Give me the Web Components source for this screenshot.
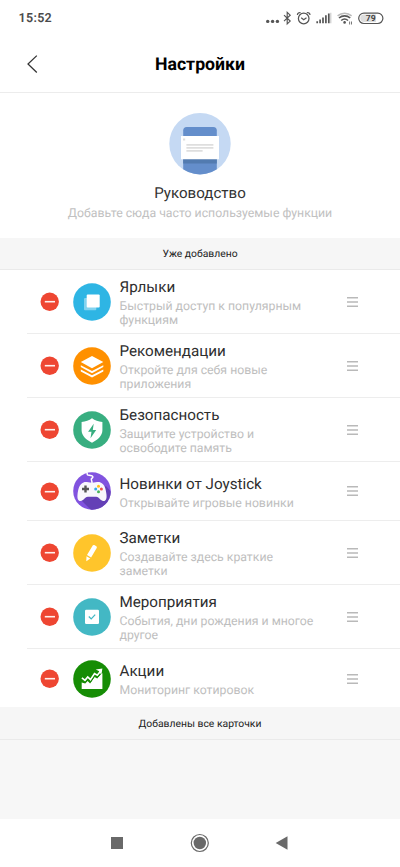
<!DOCTYPE html>
<html lang="ru"><head><meta charset="utf-8"><title>Настройки</title>
<style>html,body{margin:0;height:100%;background:#fff}body{font-family:Roboto,"Noto Sans",sans-serif;overflow:hidden;text-rendering:geometricPrecision}</style></head>
<body><settings-screen></settings-screen>
<script>
const define=(name,html)=>customElements.define(name,class extends HTMLElement{
  constructor(){super();const t=document.createElement('template');t.innerHTML=html;
    this.attachShadow({mode:'open'}).append(t.content.cloneNode(true));}
});

define('status-bar',`<style>
:host{display:flex;height:37px;box-sizing:border-box;padding:0 16px 0 18.5px;justify-content:space-between;align-items:center}
span{font-size:12.5px;font-weight:600;color:#4a4a4a;letter-spacing:.32px;line-height:16px}
svg{display:block}</style>
<span>15:52</span>
<svg width="120" height="20" viewBox="264 8.500 120 20" fill="none" stroke="#555">
<g fill="#555" stroke="none"><circle cx="267.7" cy="20.900" r="1.7"/><circle cx="272.6" cy="20.900" r="1.7"/><circle cx="277.4" cy="20.900" r="1.7"/></g>
<path d="M284 14.600l6.200 6-3 2.800V11.900l3 2.800-6.200 6" stroke-width="1.15"/>
<circle cx="303.700" cy="18" r="5.300" stroke-width="1.25"/><path d="M301.200 17.200l2.500 2 2.800-2M297.400 14.600c0-1.800 1.600-3 3.200-2.400M310 14.600c0-1.800-1.600-3-3.200-2.400" stroke-width="1.2"/>
<path d="M317.200 20.7V22.800M320.100 18.9V22.800M323 16.9V22.800M325.9 14.8V22.800M328.8 13V22.800" stroke-width="1.7"/><path d="M330.800 12.200V22.800" stroke="#c8c8c8" stroke-width="1.1"/>
<path d="M337.600 15.400c4-3.600 10-3.600 14 0" stroke="#bbb" stroke-width="1.5"/><path d="M339 17.500c3.200-2.800 8-2.800 11.200 0M341.200 20c2-1.800 4.800-1.800 6.800 0" stroke-width="1.6"/><circle cx="344.600" cy="21.900" r="1.300" fill="#555" stroke="none"/><path d="M349.600 21v3M351.500 21v3" stroke-width=".8"/>
<rect x="358.700" y="12.600" width="24.200" height="10.400" rx="5.2" fill="#fff" stroke-width="1.2"/><path d="M364 14.100h12v7.4h-12a3.7 3.7 0 010-7.4" fill="#dedede" stroke="none"/>
<text x="370.7" y="20.900" font-size="8.6" font-weight="700" text-anchor="middle" fill="#444" stroke="none">79</text></svg>`);

define('title-bar',`<style>
:host{display:grid;grid-template-columns:60px 1fr 60px;height:56px;box-sizing:border-box;border-bottom:1px solid #ececec;align-items:center}
svg{display:block;margin:0 0 1px 26px}
h1{margin:1px 0 0;font-size:17.7px;font-weight:700;text-align:center;line-height:24px;color:#000}</style>
<svg width="14" height="20" viewBox="0 0 14 20" fill="none" stroke="#333" stroke-width="1.25"><path d="M10.8 1.6L2 10l8.8 8.5"/></svg><h1><slot></slot></h1>`);

define('guide-panel',`<style>
:host{display:flex;flex-direction:column;align-items:center;height:145px;box-sizing:border-box;padding-top:20px}
svg{display:block;flex:none}
h2{margin:8px 0 0;font-size:15.1px;line-height:20px;font-weight:400;color:#333}
p{margin:2px 0 0;font-size:12.27px;line-height:16px;color:#c1c1c1;white-space:nowrap}</style>
<svg width="62" height="62" viewBox="0 0 62 62"><defs><clipPath id="c"><circle cx="31" cy="30.7" r="30.7"/></clipPath></defs>
<g clip-path="url(#c)"><path fill="#c5d9f3" d="M0 0h62v62H0z"/><rect x="14.2" y="14" width="33.6" height="60" rx="3.5" fill="#648ecb"/><path fill="#527bb0" d="M14.2 46h33.6v4.6H14.2z"/></g>
<path fill="#fff" d="M12 23h38v23.2H12z"/><path fill="#dedede" d="M14 25.4h2.2v2.2H14zM17.4 31h27v1.7h-27zM17.4 34.1h27v1.7h-27zM17.4 37h16.2v1.7H17.4z"/></svg>
<h2><slot name="title"></slot></h2><p><slot></slot></p>`);

define('section-label',`<style>
:host{display:flex;align-items:center;justify-content:center;height:32px;box-sizing:border-box;padding-top:1px;background:#f6f6f6;border-bottom:1px solid #eaeaea;font-size:10.35px;color:#222;line-height:14px}
:host([end]){height:33px;padding-top:2px}</style><slot></slot>`);

define('card-row',`<style>
:host{display:grid;grid-template-columns:19px 37.5px 1fr 12px;column-gap:14px;align-items:center;margin-left:27px;padding:0 41px 0 13px;height:64px;box-sizing:border-box;border-bottom:1px solid #ededed}
:host([single]){height:59px}
:host([last]){border:0;height:58px;padding-top:1px}
svg{display:block}
.text{margin:2px 0 0 -5px;white-space:nowrap}
:host([single]) .text{margin-top:3px}
h3{margin:0 0 3px;font-size:15.2px;line-height:18px;font-weight:400;color:#2e2e2e}
p{margin:0;font-size:12.27px;line-height:14.4px;color:#bebebe;white-space:pre-line}</style>
<svg width="19" height="19" viewBox="0 0 19 19"><circle cx="9.7" cy="9.700" r="9.2" fill="#ee4632"/><path fill="#fff0ed" d="M4.800 8.900h10.200v1.600H4.800z"/></svg>
<slot name="icon"></slot>
<div class="text"><h3><slot name="title"></slot></h3><p><slot></slot></p></div>
<svg width="12" height="12" viewBox="0 0 12 12"><path d="M0 1.800h11M0 6h11M0 10.200h11" stroke="#b9b9b9" stroke-width="1.600"/></svg>`);

const glyphs={
shortcuts:['#2eb5e4','<rect x="11" y="15" width="12.3" height="12.3" rx="1" fill="#82d3ef"/><rect x="13.7" y="11.4" width="13" height="13" rx="1" fill="#fff"/>'],
layers:['#ff9000','<path fill="#fff" d="M19 9l11.3 6L19 21.2 7.8 15zM7.8 18.2L19 24l11.3-5.8v1.9L19 26.2 7.8 20.1zM7.8 22.4L19 28.2l11.3-5.8v2L19 30.5 7.8 24.4z"/>'],
shield:['#38ae80','<path fill="#fff" d="M19 7.2c3 2.3 6.3 3.3 10.4 3.7v8.4c0 5.5-4.5 9.6-10.4 12.5C13.100 28.900 8.600 24.800 8.600 19.300V10.900C12.700 10.500 16 9.500 19 7.200z"/><path fill="#38ae80" d="M20.7 12.7l-5.6 8h3.4l-1 6.6 5.7-8.4h-3.4z"/>'],
gamepad:['#8153df','<path clip-path="url(#k)" fill="#6440b6" d="M8 28l14 14 18-8V22l-7-8z"/><path d="M14.300 0.500c-.8 3 .8 2.500 3.500 3.100 2.800.6 2.500 2 .9 2.900-1.300.8.4 1.500.3 4.500" fill="none" stroke="#fff" stroke-width="1.500"/><path fill="#f8f7fc" d="M10.500 10.400c2.700-1 4.500.3 8.500.3s5.800-1.300 8.500-.3c4 1.200 5.500 6.600 6 12.300.4 4-.6 6.300-3.100 6.300-3 0-3.900-3.900-7.200-4.200h-8.400C11.500 25.100 10.600 29 7.600 29c-2.500 0-3.500-2.300-3.100-6.300.5-5.700 2-11.100 6-12.300z"/><path d="M12.500 13.500v7M9 17h7" stroke="#555" stroke-width="2.400"/><circle cx="25.500" cy="14.300" r="1.500" fill="#ffbd19"/><circle cx="28.400" cy="17" r="1.500" fill="#f2524a"/><circle cx="22.700" cy="17" r="1.500" fill="#31a9e9"/><circle cx="25.500" cy="19.800" r="1.500" fill="#49b45b"/>'],
pencil:['#ffc52b','<g fill="#fff"><path d="M19.700 11.500q.6-1 1.600-.4l2 1.200q1 .6.400 1.600l-5.600 9.500-4.100-2.400z"/><path d="M13.500 22.200l3.800 2.200-3.600 2.700q-.4.200-.4-.3z"/></g>'],
check:['#43b8c4','<rect x="12" y="11.800" width="14" height="14.200" rx="1.200" fill="#fff"/><path d="M15.800 18.500l2.400 2.400 4-4.300" fill="none" stroke="#43b8c4" stroke-width="1.300"/>'],
stocks:['#168d05','<path fill="#fff" d="M8.700 22.500l3.500 1.100 2.400-2.700 2.500 2.500 4.500-6.500 2.600 1.700 4.100-4.900 1.100-.5V29H8.700z"/><path d="M8.900 17.800l3.100 2.500 2.700-3.400 2.800 2.800 4-6.100 2.800 1.600 4-4.900" fill="none" stroke="#fff" stroke-width="1.700"/><path d="M9 21.300l3.100 1.400 2.700-3.200 2.800 2.500 4-5.900 2.800 1.400 4.800-5.600" fill="none" stroke="#168d05" stroke-width="1"/><path fill="#fff" d="M22.700 9.600l6.700-1-1.100 6.300-1.500-2.500-1-1.500z"/>']
};
customElements.define('card-icon',class extends HTMLElement{
  connectedCallback(){
    if(this.shadowRoot)return;
    const [color,art]=glyphs[this.getAttribute('kind')];
    this.attachShadow({mode:'open'}).innerHTML=`<style>:host{display:block;width:38px;height:38px}svg{display:block}</style><svg width="38" height="38" viewBox="0 0 38 38"><defs><clipPath id="k"><circle cx="19" cy="19" r="18.800"/></clipPath></defs><circle cx="19" cy="19" r="18.800" fill="${color}"/>${art}</svg>`;
  }
});

define('nav-bar',`<style>:host{display:flex;height:48px;background:#fff;justify-content:center;align-items:center;gap:63px}svg{display:block}</style>
<svg width="20" height="20" viewBox="0 0 20 20"><path fill="#696969" d="M4 4h12v12H4z"/></svg>
<svg width="20" height="20" viewBox="0 0 20 20" overflow="visible"><circle cx="9.800" cy="10" r="8.500" fill="none" stroke="#696969" stroke-width="1.200"/><circle cx="9.800" cy="10" r="6.200" fill="#696969"/></svg>
<svg width="20" height="20" viewBox="0 0 20 20"><path fill="#696969" d="M14.500 3.200v13.600L2.700 10z"/></svg>`);

const rows=[
['shortcuts','Ярлыки','Быстрый доступ к популярным\nфункциям'],
['layers','Рекомендации','Откройте для себя новые\nприложения'],
['shield','Безопасность','Защитите устройство и\nосвободите память'],
['gamepad','Новинки от Joystick','Открывайте игровые новинки'],
['pencil','Заметки','Создавайте здесь краткие\nзаметки'],
['check','Мероприятия','События, дни рождения и многое\nдругое'],
['stocks','Акции','Мониторинг котировок']];
define('settings-screen',`<style>
:host{display:flex;flex-direction:column;height:867px;width:400px;background:#fff}
main{flex:1;background:#f7f7f7;min-height:0}
.list{background:#fff}
</style><status-bar></status-bar><title-bar>Настройки</title-bar>
<main><div class="list"><guide-panel><span slot="title">Руководство</span>Добавьте сюда часто используемые функции</guide-panel>
<section-label>Уже добавлено</section-label>${rows.map(([k,t,d],i)=>`<card-row ${d.includes('\n')?'':'single'} ${i===6?'last':''}><card-icon slot="icon" kind="${k}"></card-icon><span slot="title">${t}</span>${d}</card-row>`).join('')}</div>
<section-label end>Добавлены все карточки</section-label></main><nav-bar></nav-bar>`);
</script></body></html>
